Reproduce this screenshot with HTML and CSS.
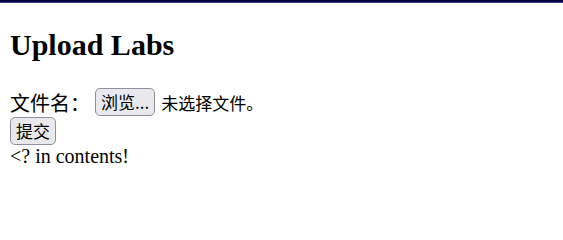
FILE: index.html
```html
<!DOCTYPE html>
<html lang="zh">
<head>
<meta charset="utf-8">
<title>Upload Labs</title>
<link rel="stylesheet" href="styles.css">
</head>
<body>
<div class="topbar"></div>
<div class="page">
  <h1 class="title">Upload Labs</h1>
  <form class="upload-form" action="#" method="post">
    <div class="row">
      <label class="label">文件名：</label>
      <span class="file-input"><button type="button" class="btn">浏览...</button><span class="file-status">未选择文件。</span></span>
    </div>
    <div class="row">
      <button type="submit" class="btn">提交</button>
    </div>
  </form>
  <div class="message">&lt;? in contents!</div>
</div>
</body>
</html>
```
FILE: styles.css
```css
html, body {
  margin: 0;
  padding: 0;
  background: #ffffff;
}
body {
  font-family: "Liberation Serif", "Noto Sans CJK SC", serif;
  font-size: 20px;
  color: #000000;
}
.topbar {
  height: 3px;
  background: linear-gradient(#000033, #0a0a5c 60%, #5a5a8a);
}
.page {
  padding: 0 10px;
}
.title {
  font-size: 30px;
  font-weight: bold;
  margin: 25px 0 25px;
  line-height: 34.5px;
}
.upload-form {
  margin: 0;
}
.row {
  display: flex;
  align-items: center;
}
.label {
  margin-right: 5px;
}
.file-input {
  display: flex;
  align-items: center;
}
.btn {
  font-family: "Noto Sans CJK SC", "Liberation Sans", sans-serif;
  font-size: 17px;
  line-height: 20px;
  height: 28px;
  padding: 0 5px;
  border: 1px solid #8f8f9d;
  border-radius: 5px;
  background: #e9e9ed;
  color: #000000;
  box-sizing: border-box;
}
.file-status {
  font-family: "Noto Sans CJK SC", "Liberation Sans", sans-serif;
  font-size: 17px;
  margin-left: 6px;
}
.message {
  line-height: 23px;
}
```
